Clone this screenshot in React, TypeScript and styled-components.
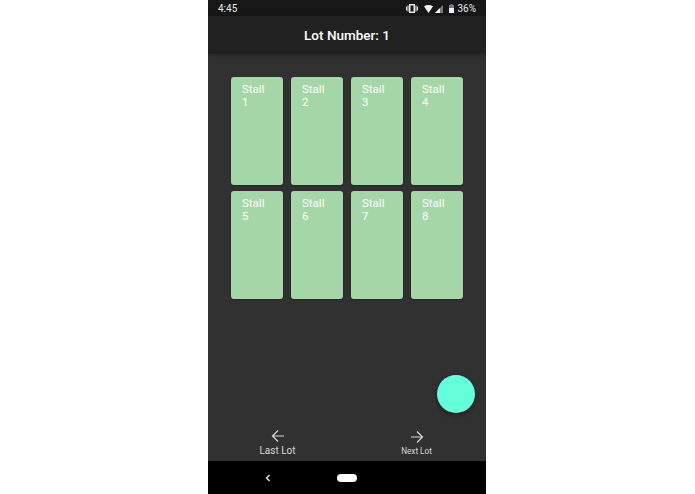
import React from 'react'
import styled, { createGlobalStyle } from 'styled-components'

const Global = createGlobalStyle`
  html, body { margin: 0; padding: 0; background: #ffffff; }
  * { box-sizing: border-box; }
`

const Page = styled.div`
  width: 695px;
  height: 494px;
  display: flex;
  justify-content: center;
  font-family: Roboto, "Liberation Sans", sans-serif;
  padding-right: 1px;
`

const Phone = styled.div`
  position: relative;
  width: 278px;
  height: 494px;
  display: flex;
  flex-direction: column;
  background: #313131;
  overflow: hidden;
`

const StatusBar = styled.div`
  height: 16px;
  background: #171717;
  color: #e8e8e8;
  font-size: 10px;
  display: flex;
  align-items: center;
  justify-content: space-between;
  padding: 1px 10px 0 10px;
`

const StatusIcons = styled.div`
  display: flex;
  align-items: center;
  gap: 3px;
`

const Header = styled.div`
  height: 38px;
  background: #212121;
  color: #ffffff;
  font-size: 13.5px;
  font-weight: 500;
  display: flex;
  align-items: center;
  justify-content: center;
  box-shadow: 0 2px 5px rgba(0, 0, 0, 0.22);
`

const Content = styled.div`
  flex: 1;
  padding: 23px 0 0 23px;
`

const StallGrid = styled.div`
  display: grid;
  grid-template-columns: repeat(4, 51.5px);
  grid-auto-rows: 108px;
  column-gap: 8.5px;
  row-gap: 5.5px;
`

const StallCard = styled.div`
  background: #a5d6a7;
  border-radius: 3px;
  color: #ffffff;
  font-size: 11.5px;
  line-height: 13px;
  padding: 6px 4px 0 11px;
  box-shadow: 0 1px 2px rgba(0, 0, 0, 0.25);
`

const Fab = styled.div`
  position: absolute;
  left: 229px;
  top: 375px;
  width: 38px;
  height: 38px;
  border-radius: 50%;
  background: #64ffda;
  box-shadow: 0 2px 5px rgba(0, 0, 0, 0.4);
`

const LotNav = styled.div`
  height: 39px;
  display: flex;
`

const NavButton = styled.div<{ $small?: boolean }>`
  flex: 1;
  display: flex;
  flex-direction: column;
  align-items: center;
  color: #d8d8d8;
  font-size: ${p => (p.$small ? '8.2px' : '10px')};
  line-height: 11px;
  padding-top: ${p => (p.$small ? '8px' : '7px')};
  gap: 2px;
`

const SystemBar = styled.div`
  height: 33px;
  background: #000000;
  display: flex;
  align-items: center;
  padding-left: 57px;
  gap: 66px;
`

const HomePill = styled.div`
  width: 20px;
  height: 8px;
  border-radius: 4px;
  background: #ffffff;
`

const Arrow = ({ flip }: { flip?: boolean }) => (
  <svg width="14" height="14" viewBox="0 0 14 14" fill="none" stroke="#d8d8d8" strokeWidth="1.2"
    style={flip ? { transform: 'scaleX(-1)' } : undefined}>
    <path d="M13 7H1.5M7 1.5L1.5 7L7 12.5" />
  </svg>
)

const stalls = [1, 2, 3, 4, 5, 6, 7, 8]

export default function App() {
  return (
    <Page>
      <Global />
      <Phone>
        <StatusBar>
          <span>4:45</span>
          <StatusIcons>
            <svg width="12" height="9" viewBox="0 0 12 9" fill="#e8e8e8">
              <path d="M3 0h6v9H3zM0 2.500h1v4H0zM11 2.500h1v4h-1zM1.500 1.500h1v6h-1zM9.500 1.500h1v6h-1z" />
              <rect x="4.500" y="1.500" width="3" height="6" fill="#171717" />
            </svg>
            <svg width="9" height="8" viewBox="0 0 9 8" fill="#f0f0f0" style={{ marginLeft: 3 }}>
              <path d="M0 1.200Q4.500 -1 9 1.200L4.500 8Z" />
            </svg>
            <svg width="8" height="8" viewBox="0 0 8 8" style={{ marginLeft: -1 }}>
              <path d="M8 0V8H0Z" fill="#777" />
              <path d="M5 3V8H0Z" fill="#f0f0f0" />
            </svg>
            <svg width="5" height="9" viewBox="0 0 5 9" style={{ marginLeft: 3 }}>
              <path d="M1.500 0h2v1H5v8H0V1h1.500z" fill="#777" />
              <rect y="4" width="5" height="5" fill="#f0f0f0" />
            </svg>
            <span>36%</span>
          </StatusIcons>
        </StatusBar>
        <Header>Lot Number: 1</Header>
        <Content>
          <StallGrid>
            {stalls.map(n => (
              <StallCard key={n}>
                Stall
                <br />
                {n}
              </StallCard>
            ))}
          </StallGrid>
        </Content>
        <Fab />
        <LotNav>
          <NavButton>
            <Arrow />
            <span>Last Lot</span>
          </NavButton>
          <NavButton $small>
            <Arrow flip />
            <span>Next Lot</span>
          </NavButton>
        </LotNav>
        <SystemBar>
          <svg width="6" height="8" viewBox="0 0 6 8" fill="none" stroke="#ffffff" strokeWidth="1.200">
            <path d="M4.500 1L1.500 4L4.500 7" />
          </svg>
          <HomePill />
        </SystemBar>
      </Phone>
    </Page>
  )
}
